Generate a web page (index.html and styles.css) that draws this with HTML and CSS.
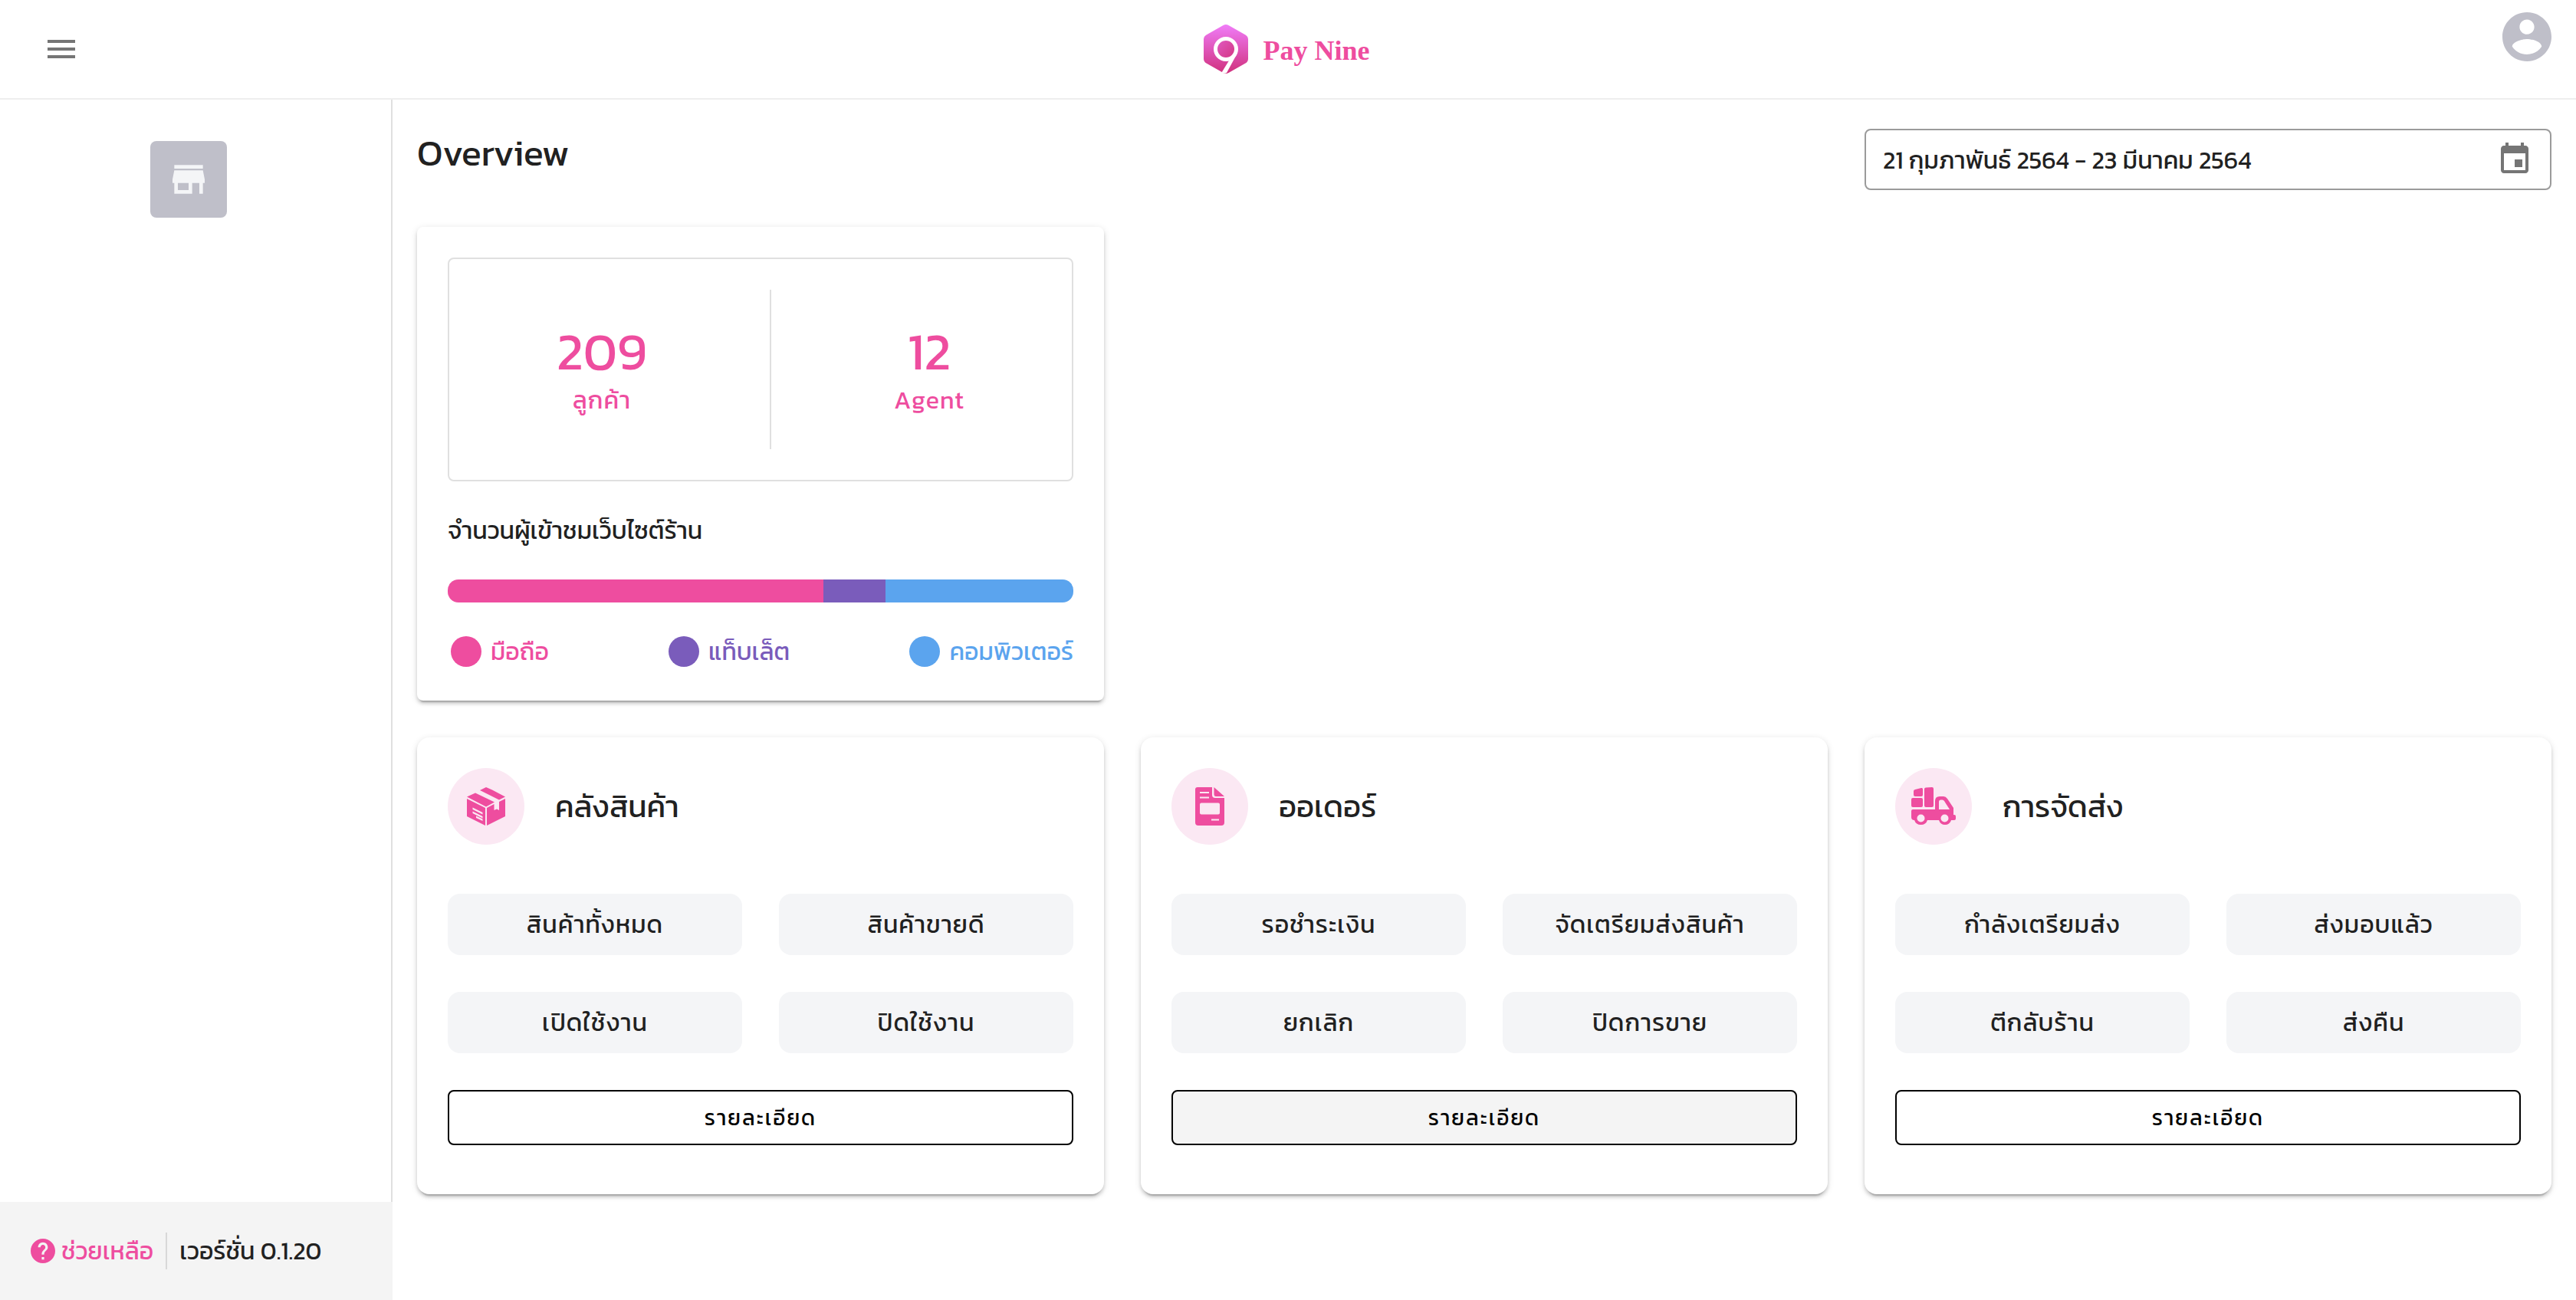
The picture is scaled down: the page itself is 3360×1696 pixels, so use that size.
FILE: index.html
```html
<!DOCTYPE html>
<html lang="th">
<head>
<meta charset="utf-8">
<title>Pay Nine</title>
<link rel="stylesheet" href="styles.css">
</head>
<body>
<header class="topbar">
  <button class="icon-btn" type="button" aria-label="เมนู">
    <svg class="icon" viewBox="0 0 24 24"><path d="M3 18h18v-2H3v2zm0-5h18v-2H3v2zm0-7v2h18V6H3z"/></svg>
  </button>
  <a class="brand" href="#">
    <svg class="brand-mark" viewBox="0 0 58 64" aria-hidden="true">
      <defs>
        <linearGradient id="hex" x1="0" y1="0" x2="0" y2="1"><stop offset="0" stop-color="#f07cf8"/><stop offset="1" stop-color="#d0307c"/></linearGradient>
        <linearGradient id="dot" x1="0" y1="0" x2="1" y2="1"><stop offset="0" stop-color="#e25cc6"/><stop offset="1" stop-color="#d2347f"/></linearGradient>
      </defs>
      <path fill="url(#hex)" d="M25.500 1Q29-1 32.500 1L54.500 13.500Q58 15.500 58 19.500V44.500Q58 48.500 54.500 50.500L32.500 63Q29 65 25.500 63L3.500 50.500Q0 48.500 0 44.500V19.500Q0 15.500 3.500 13.500Z"/>
      <circle cx="29" cy="32" r="13.500" fill="url(#dot)" stroke="#fff" stroke-width="5"/>
      <path fill="#fff" d="M36.500 42.500 42.500 40 30 63Q27 64.500 23.500 62.500L34 45.500Z"/>
    </svg>
    <span>Pay Nine</span>
  </a>
  <button class="avatar" type="button" aria-label="บัญชีผู้ใช้">
    <svg viewBox="2 2 20 20"><path d="M12 2C6.480 2 2 6.480 2 12s4.480 10 10 10 10-4.480 10-10S17.520 2 12 2zm0 3c1.660 0 3 1.340 3 3s-1.340 3-3 3-3-1.340-3-3 1.340-3 3-3zm0 14.200c-2.500 0-4.710-1.280-6-3.220.03-1.990 4-3.080 6-3.080 1.990 0 5.970 1.090 6 3.080-1.290 1.940-3.500 3.220-6 3.220z"/></svg>
  </button>
</header>

<div class="layout">
  <aside class="sidebar">
    <div class="sidebar-body">
      <a class="shop" href="#" aria-label="ร้านค้า">
        <svg viewBox="0 0 24 24"><path d="M20 4H4v2h16V4zm1 10v-2l-1-5H4l-1 5v2h1v6h10v-6h4v6h2v-6h1zm-9 4H6v-4h6v4z"/></svg>
      </a>
    </div>
    <footer class="sidebar-foot">
      <a class="help" href="#">
        <svg viewBox="2 2 20 20"><path d="M12 2C6.480 2 2 6.480 2 12s4.480 10 10 10 10-4.480 10-10S17.520 2 12 2zm1 17h-2v-2h2v2zm2.070-7.750l-.9.920C13.450 12.900 13 13.500 13 15h-2v-.5c0-1.100.45-2.100 1.170-2.830l1.240-1.260c.37-.36.590-.860.590-1.410 0-1.100-.9-2-2-2s-2 .9-2 2H8c0-2.210 1.790-4 4-4s4 1.790 4 4c0 .880-.360 1.680-.930 2.250z"/></svg>
        ช่วยเหลือ
      </a>
      <span class="version">เวอร์ชั่น 0.1.20</span>
    </footer>
  </aside>

  <main class="content">
    <div class="page-head">
      <h1>Overview</h1>
      <label class="date-field">
        <input type="text" aria-label="ช่วงวันที่" value="21 กุมภาพันธ์ 2564 - 23 มีนาคม 2564" readonly>
        <svg class="icon" viewBox="0 0 24 24"><path d="M17 12h-5v5h5v-5zM16 1v2H8V1H6v2H5c-1.110 0-1.990.9-1.990 2L3 19c0 1.100.890 2 2 2h14c1.100 0 2-.9 2-2V5c0-1.100-.9-2-2-2h-1V1h-2zm3 18H5V8h14v11z"/></svg>
      </label>
    </div>

    <div class="grid">
      <section class="card summary">
        <div class="stats">
          <div class="stat"><strong>209</strong><span>ลูกค้า</span></div>
          <div class="stat-divider"></div>
          <div class="stat"><strong>12</strong><span>Agent</span></div>
        </div>
        <h2 class="visits-title">จำนวนผู้เข้าชมเว็บไซต์ร้าน</h2>
        <div class="bar">
          <div class="mobile" style="width:60%"></div>
          <div class="tablet" style="width:10%"></div>
          <div class="desktop" style="width:30%"></div>
        </div>
        <ul class="legend">
          <li class="is-mobile">มือถือ</li>
          <li class="is-tablet">แท็บเล็ต</li>
          <li class="is-desktop">คอมพิวเตอร์</li>
        </ul>
      </section>

      <section class="card panel first">
        <div class="panel-head">
          <span class="badge">
            <svg viewBox="0 0 50 50"><path d="M25 0 33 3.500 50 12.500 42 16.500 17 4ZM11 7.500 36 19.500 25 25.500 0 12.500ZM0 15 24 27V50L0 38ZM50 15V38L26 50V27L35.500 22V30L39 28.500 42 30V19Z"/><path class="cut" d="M7.500 26.500 20.500 33V35.500L7.500 29ZM7.500 31.500 20.500 38V40.500L7.500 34ZM12 37.500 20.500 41.500V44L12 40Z"/></svg>
          </span>
          <h2>คลังสินค้า</h2>
        </div>
        <div class="tiles">
          <a href="#">สินค้าทั้งหมด</a><a href="#">สินค้าขายดี</a>
          <a href="#">เปิดใช้งาน</a><a href="#">ปิดใช้งาน</a>
        </div>
        <button class="detail" type="button">รายละเอียด</button>
      </section>

      <section class="card panel">
        <div class="panel-head">
          <span class="badge">
            <svg viewBox="0 0 50 50"><path d="M9 0H28V10Q28 14 32 14H44V46Q44 50 40 50H10Q6 50 6 46V3Q6 0 9 0ZM30.500 0 44 12H33Q30.500 12 30.500 9Z"/><path class="cut" d="M12 6H24V8H12ZM12 12.500H24V14.500H12ZM14 20.500H36Q38 20.500 38 22.500V33.500Q38 35.500 36 35.500H14Q12 35.500 12 33.500V22.500Q12 20.500 14 20.500ZM27 41.500H37V43.500H27Z"/></svg>
          </span>
          <h2>ออเดอร์</h2>
        </div>
        <div class="tiles">
          <a href="#">รอชำระเงิน</a><a href="#">จัดเตรียมส่งสินค้า</a>
          <a href="#">ยกเลิก</a><a href="#">ปิดการขาย</a>
        </div>
        <button class="detail active" type="button">รายละเอียด</button>
      </section>

      <section class="card panel">
        <div class="panel-head">
          <span class="badge">
            <svg class="wide" viewBox="0 0 58 50"><path d="M3 5Q3 3.500 5 3L13 1Q15 .5 15 2.500V10Q15 12 13 12H5Q3 12 3 10ZM2 14H13Q15 14 15 16V24Q15 26 13 26H2Q0 26 0 24V16Q0 14 2 14ZM19 .5L27 0Q29 0 29 2V24Q29 26 27 26H19Q17 26 17 24V2.500Q17 .5 19 .5ZM2 29H31V18Q31 12 37 12H42Q45 12 47 15L55 27V36H56Q58 36 58 38V41Q58 43 56 43H52Q50 49 44 49T36 43H21Q19 49 12.500 49T4 43Q0 43 0 39V31Q0 29 2 29Z"/><path class="cut" d="M36 29V19Q36 16.500 38.500 16.500H40.500Q42 16.500 43 18L50 29Z"/><circle class="cut" cx="12.500" cy="40.500" r="5"/><circle class="cut" cx="43.500" cy="40.500" r="5"/></svg>
          </span>
          <h2>การจัดส่ง</h2>
        </div>
        <div class="tiles">
          <a href="#">กำลังเตรียมส่ง</a><a href="#">ส่งมอบแล้ว</a>
          <a href="#">ตีกลับร้าน</a><a href="#">ส่งคืน</a>
        </div>
        <button class="detail" type="button">รายละเอียด</button>
      </section>
    </div>
  </main>
</div>
</body>
</html>
```
FILE: styles.css
```css
:root {
  --pink: #ee4d9f;
  --pink-soft: #fbe8f3;
  --purple: #7a5cbb;
  --blue: #5ba4ee;
  --ink: #212121;
  --grey: #757575;
  --line: #e0e0e0;
  --tile: #f4f5f7;
}

* { box-sizing: border-box; }

body {
  margin: 0;
  min-height: 100vh;
  display: flex;
  flex-direction: column;
  background: #fff;
  color: var(--ink);
  font: 400 32px/48px Kanit, Prompt, "Noto Sans Thai", "Noto Sans", sans-serif;
}

h1, h2 { margin: 0; font-weight: 400; }
a { color: inherit; text-decoration: none; }
svg { display: block; fill: currentColor; }
button { padding: 0; border: 0; background: none; font: inherit; color: inherit; cursor: pointer; }

.icon { width: 48px; height: 48px; color: var(--grey); }

.topbar {
  display: grid;
  grid-template-columns: 1fr auto 1fr;
  align-items: center;
  height: 130px;
  padding: 0 32px 0 56px;
  border-bottom: 2px solid #eee;
}
.icon-btn { justify-self: start; }
.brand {
  display: flex;
  align-items: center;
  gap: 20px;
  padding-right: 28px;
  color: var(--pink);
  font: 700 36px/48px "Liberation Serif", serif;
}
.brand span { padding-top: 4px; }
.brand-mark { width: 58px; height: 64px; }
.avatar { justify-self: end; align-self: start; margin-top: 16px; color: #bfbfc9; }
.avatar svg { width: 64px; height: 64px; }

.layout { flex: 1; display: grid; grid-template-columns: 512px 1fr; }

.sidebar { display: flex; flex-direction: column; }
.sidebar-body {
  flex: 1;
  display: flex;
  justify-content: center;
  align-items: flex-start;
  padding: 54px 18px 0 0;
  border-right: 2px solid var(--line);
}
.shop {
  display: grid;
  place-items: center;
  width: 100px;
  height: 100px;
  border-radius: 8px;
  background: #bfbfc9;
  color: #f4f5f7;
}
.shop svg { width: 56px; height: 56px; }
.sidebar-foot {
  display: flex;
  align-items: center;
  height: 128px;
  padding: 0 40px;
  background: #f4f4f4;
  white-space: nowrap;
}
.help { display: flex; align-items: center; gap: 8px; padding-right: 16px; color: var(--pink); }
.help svg { width: 32px; height: 32px; }
.version { padding-left: 16px; border-left: 2px solid #d8d8d8; }

.content { padding: 38px 32px 48px; }
.page-head {
  display: grid;
  grid-template-columns: repeat(3, 1fr);
  column-gap: 48px;
  margin-bottom: 48px;
}
.page-head h1 { grid-column: span 2; font-size: 48px; line-height: 62px; }
.date-field {
  display: flex;
  align-items: center;
  height: 80px;
  padding: 0 22px;
  border: 2px solid #9b9b9b;
  border-radius: 8px;
}
.date-field input {
  flex: 1;
  min-width: 0;
  padding: 2px 0 0;
  border: 0;
  outline: 0;
  background: none;
  font: inherit;
  color: inherit;
}

.grid { display: grid; grid-template-columns: repeat(3, 1fr); gap: 48px; }
.card {
  padding: 40px;
  border-radius: 16px;
  background: #fff;
  box-shadow: 0 6px 2px -4px rgba(0, 0, 0, .2), 0 4px 4px rgba(0, 0, 0, .14), 0 2px 10px rgba(0, 0, 0, .12);
}
.summary { grid-column: 1; border-radius: 8px; }
.first { grid-column: 1; }

.stats {
  display: flex;
  justify-content: space-evenly;
  align-items: center;
  padding: 40px 0;
  border: 2px solid var(--line);
  border-radius: 8px;
  color: var(--pink);
}
.stat { display: flex; flex-direction: column; align-items: center; letter-spacing: 1px; }
.stat strong { font-size: 68px; line-height: 80px; font-weight: 400; letter-spacing: 0; }
.stat-divider { width: 2px; height: 208px; margin: 0 20px; background: var(--line); }

.visits-title { margin: 40px 0; font-size: 32px; line-height: 48px; }
.bar { display: flex; height: 30px; border-radius: 14px; overflow: hidden; }
.mobile { background: var(--pink); }
.tablet { background: var(--purple); }
.desktop { background: var(--blue); }

.legend {
  display: flex;
  justify-content: space-between;
  margin: 40px 0 0;
  padding: 0;
  list-style: none;
}
.legend li { display: flex; align-items: center; gap: 12px; padding-left: 4px; }
.legend li::before { content: ""; width: 40px; height: 40px; border-radius: 50%; background: currentColor; }
.is-mobile { color: var(--pink); }
.is-tablet { color: var(--purple); }
.is-desktop { color: var(--blue); }

.panel { padding-bottom: 64px; }
.panel-head { display: flex; align-items: center; gap: 40px; margin-bottom: 64px; }
.panel-head h2 { font-size: 40px; line-height: 64px; }
.badge {
  display: grid;
  place-items: center;
  width: 100px;
  height: 100px;
  border-radius: 50%;
  background: var(--pink-soft);
  color: var(--pink);
}
.badge svg { width: 50px; height: 50px; }
.badge .wide { width: 58px; }
.cut { fill: var(--pink-soft); }

.tiles { display: grid; grid-template-columns: 1fr 1fr; gap: 48px; margin-bottom: 48px; }
.tiles a {
  padding: 16px;
  border-radius: 16px;
  background: var(--tile);
  text-align: center;
  letter-spacing: 1px;
}
.detail {
  width: 100%;
  height: 72px;
  border: 2px solid #000;
  border-radius: 8px;
  color: #000;
  font-size: 28px;
  letter-spacing: 2px;
}
.detail.active { background: #f4f4f4; }
```
